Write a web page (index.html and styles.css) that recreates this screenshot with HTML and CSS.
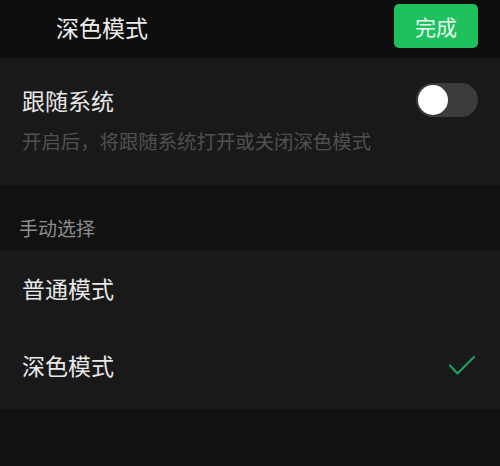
FILE: index.html
```html
<!DOCTYPE html>
<html lang="zh-CN">
<head>
  <meta charset="UTF-8">
  <meta name="viewport" content="width=device-width, initial-scale=1.0">
  <title>深色模式</title>
  <link rel="stylesheet" href="styles.css">
</head>
<body>
  <!-- Top Bar -->
  <header class="top-bar">
    <span class="top-title">深色模式</span>
    <button class="done-btn">完成</button>
  </header>

  <!-- Follow System -->
  <section class="group follow">
    <div class="row">
      <span class="row-label">跟随系统</span>
      <span class="switch"><span class="knob"></span></span>
    </div>
    <p class="hint">开启后，将跟随系统打开或关闭深色模式</p>
  </section>

  <div class="group-title">手动选择</div>

  <!-- Manual Options -->
  <section class="group options">
    <div class="option">
      <span class="row-label">普通模式</span>
    </div>
    <div class="option">
      <span class="row-label">深色模式</span>
      <svg class="check" width="28" height="22" viewBox="0 0 28 22">
        <path d="M2 10.5 L9.5 18.5 L26 2" fill="none" stroke="#20a060" stroke-width="2.2" stroke-linecap="round" stroke-linejoin="round"/>
      </svg>
    </div>
  </section>
</body>
</html>
```

FILE: styles.css
```css
/* General Styling */
body {
  font-family: "Noto Sans CJK SC", "Noto Sans", sans-serif;
  margin: 0;
  padding: 0;
  background-color: #111111;
  color: #e6e6e6;
  height: 466px;
  overflow: hidden;
}
/* Top Bar */
.top-bar {
  height: 58px;
  background-color: #0e0e0e;
  display: flex;
  align-items: center;
  justify-content: space-between;
  padding: 0 22px 0 56px;
  box-sizing: border-box;
}
.top-title {
  font-size: 23px;
  color: #ececec;
  margin-top: -5px;
}
.done-btn {
  width: 84px;
  height: 44px;
  margin-top: -6px;
  background: #1fc05e;
  color: #eafff0;
  font-family: inherit;
  font-size: 21px;
  border: none;
  border-radius: 5px;
  padding: 0;
}
/* Groups */
.group {
  background-color: #191919;
}
.follow {
  height: 127px;
  padding: 24px 22px 0 22px;
  box-sizing: border-box;
}
.row {
  display: flex;
  align-items: center;
  justify-content: space-between;
  height: 36px;
}
.row-label {
  font-size: 23px;
  color: #e8e8e8;
}
.switch {
  width: 62px;
  height: 34px;
  border-radius: 17px;
  background: #3c3c3c;
  display: flex;
  align-items: center;
  padding: 0 2px;
  box-sizing: border-box;
}
.knob {
  width: 30px;
  height: 30px;
  border-radius: 50%;
  background: #ffffff;
}
.hint {
  margin: 8px 0 0;
  font-size: 19.4px;
  color: #505050;
  white-space: nowrap;
}
.group-title {
  height: 65px;
  padding: 0 19px;
  display: flex;
  align-items: center;
  font-size: 19px;
  color: #8e8e8e;
  box-sizing: border-box;
  padding-top: 20px;
}
.options {
  height: 159px;
  padding: 0 24px 0 22px;
}
.option {
  height: 78px;
  display: flex;
  align-items: center;
  justify-content: space-between;
}
.option:first-child {
  height: 76px;
}
.check {
  margin-top: 2px;
}
```
